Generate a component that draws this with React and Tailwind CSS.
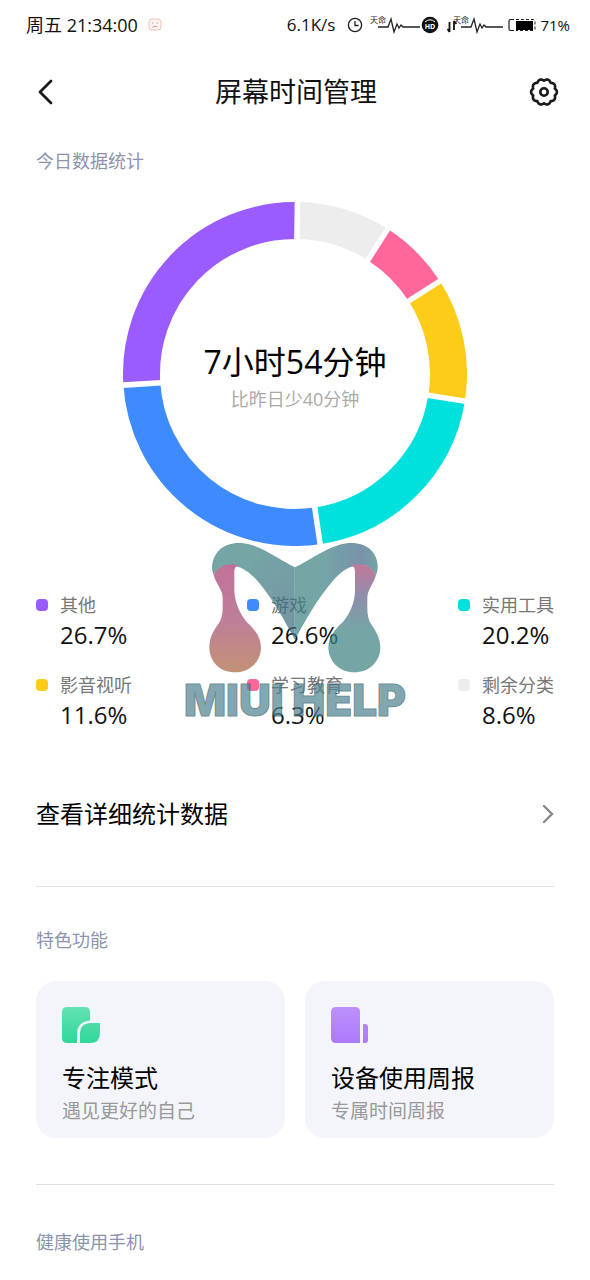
import React from 'react';

const categories = [
  { name: '其他', value: '26.7%', dot: 'bg-[#9b5cff]' },
  { name: '游戏', value: '26.6%', dot: 'bg-[#3d8bff]' },
  { name: '实用工具', value: '20.2%', dot: 'bg-[#00e0dc]' },
  { name: '影音视听', value: '11.6%', dot: 'bg-[#fccc18]' },
  { name: '学习教育', value: '6.3%', dot: 'bg-[#ff6699]' },
  { name: '剩余分类', value: '8.6%', dot: 'bg-[#ededed]' },
];

// start and end angle of each slice, clockwise from the top
const slices = [
  { color: '#ededed', from: 0.8, to: 32.6 },
  { color: '#ff6699', from: 32.6, to: 57.3 },
  { color: '#fccc18', from: 57.3, to: 99.1 },
  { color: '#00e0dc', from: 99.1, to: 171.6 },
  { color: '#3d8bff', from: 171.6, to: 266.3 },
  { color: '#9b5cff', from: 266.3, to: 360.8 },
];

const polar = (radius, angle, center) => {
  const rad = ((angle - 90) * Math.PI) / 180;
  return `${(center + radius * Math.cos(rad)).toFixed(2)} ${(center + radius * Math.sin(rad)).toFixed(2)}`;
};

// ten round lobes with a short notch between them
const gearPath = () => {
  const points = [];
  for (let a = 0; a < 360; a += 3) {
    points.push(polar(11.3 + 1.6 * Math.abs(Math.sin((a * 5 * Math.PI) / 180)), a, 15));
  }
  return `M${points.join('L')}Z`;
};

const Donut = () => (
  <svg viewBox="0 0 344 344" className="w-full" aria-hidden="true">
    {slices.map((s) => (
      <path
        key={s.color}
        d={`M${polar(153.5, s.from, 172)}A153.5 153.5 0 0 1 ${polar(153.5, s.to, 172)}`}
        fill="none"
        stroke={s.color}
        strokeWidth="37"
      />
    ))}
    {slices.map((s) => (
      <path
        key={s.from}
        d={`M${polar(130, s.from, 172)}L${polar(175, s.from, 172)}`}
        stroke="#fff"
        strokeWidth="5.5"
      />
    ))}
  </svg>
);

const Pulse = () => (
  <svg viewBox="0 0 50 22" className="h-[22px] w-[50px]" aria-hidden="true">
    <text x="0" y="9" fontSize="8" fill="#222">天命</text>
    <path
      d="M8 13H18L21 5L24 18L27 10L29 14L31 11L33 13H50"
      fill="none"
      stroke="#222"
      strokeWidth="1.3"
    />
  </svg>
);

const StatusBar = () => (
  <div className="flex h-[50px] items-center justify-between pr-5 pl-[26px] text-[18px] text-[#111]">
    <div className="flex items-center gap-2.5">
      <span>周五 21:34:00</span>
      <svg viewBox="0 0 14 14" className="size-[14px]" aria-hidden="true">
        <rect x="1" y="1" width="12" height="11" rx="3" fill="#fff3f0" stroke="#e9c4be" />
        <path d="M4 5H5.500M8.500 5H10M4.500 9Q7 7.500 9.500 9" stroke="#c99" fill="none" />
      </svg>
    </div>
    <div className="flex items-center">
      <span className="text-[17px]">6.1K/s</span>
      <svg viewBox="0 0 16 16" className="ml-3 size-4" fill="none" stroke="#222" strokeWidth="1.3" aria-hidden="true">
        <circle cx="8" cy="8" r="6.600" />
        <path d="M8 4V8.500H11.500" />
      </svg>
      <div className="ml-[7px] flex">
        <Pulse />
      </div>
      <svg viewBox="0 0 18 18" className="ml-px size-[18px]" aria-hidden="true">
        <circle cx="9" cy="9" r="8.300" fill="#111" />
        <path d="M4 6Q9 1.500 14 6" fill="none" stroke="#fff" strokeWidth="1" />
        <text x="9" y="12.500" fontSize="7" fontWeight="700" textAnchor="middle" fill="#fff">HD</text>
      </svg>
      <svg viewBox="0 0 10 16" className="ml-2 h-4 w-[10px]" fill="none" stroke="#111" strokeWidth="1.800" aria-hidden="true">
        <path d="M2.500 5V15M0.500 12L2.500 15M7 13V4M9.500 7L7 4" />
      </svg>
      <div className="-ml-1 flex">
        <Pulse />
      </div>
      <svg viewBox="0 0 30 14" className="ml-1 h-[14px] w-[30px]" aria-hidden="true">
        <path d="M7 1.500H3.500Q2 1.500 2 3V11Q2 12.500 3.500 12.500H7" fill="none" stroke="#222" strokeWidth="1.200" />
        <rect x="9" y="3" width="17" height="9" fill="#000" />
        <path d="M9 1.500H26Q28 1.500 28 3V11Q28 12.500 26 12.500H9" fill="none" stroke="#222" strokeDasharray="3 2" />
      </svg>
      <span className="ml-[3px] text-[15px]">71%</span>
    </div>
  </div>
);

const Watermark = () => (
  <div className="pointer-events-none absolute inset-x-0 top-[408px] flex flex-col items-center opacity-70">
    <svg viewBox="120 36 515 394" className="h-[131px] w-[172px]" aria-hidden="true">
      <defs>
        <linearGradient id="legLeft" x1="0" y1="0" x2="0" y2="1">
          <stop offset="0" stopColor="#a8356f" />
          <stop offset="0.5" stopColor="#a3486f" />
          <stop offset="1" stopColor="#a9643c" />
        </linearGradient>
        <linearGradient id="legRight" x1="0" y1="0" x2="0" y2="1">
          <stop offset="0" stopColor="#a8406f" />
          <stop offset="0.3" stopColor="#5f5f88" />
          <stop offset="0.6" stopColor="#3b8080" />
          <stop offset="1" stopColor="#3b8080" />
        </linearGradient>
        <linearGradient id="armLeft" x1="0" y1="0" x2="1" y2="1">
          <stop offset="0.3" stopColor="#3b8080" />
          <stop offset="1" stopColor="#3c6880" />
        </linearGradient>
        <linearGradient id="armRight" x1="0" y1="0" x2="1" y2="0">
          <stop offset="0" stopColor="#3b8080" />
          <stop offset="0.35" stopColor="#3b8080" />
          <stop offset="0.8" stopColor="#3f6487" />
          <stop offset="1" stopColor="#3b8080" />
        </linearGradient>
      </defs>
      <path
        d="M133 136C122 112 130 80 150 60C172 38 210 34 245 44C295 60 335 92 377 112V330C345 270 310 205 265 153C245 131 215 108 196 110C170 100 148 110 133 136Z"
        fill="url(#armLeft)"
      />
      <path
        d="M621 136C632 112 626 80 606 60C584 38 546 34 511 44C461 60 419 92 377 112V330C409 270 446 205 491 153C511 131 537 108 558 110C584 98 606 110 621 136Z"
        fill="url(#armRight)"
      />
      <path
        d="M133 136C148 106 172 98 208 106C197 109 195 118 195 128V185C198 220 210 250 233 277C260 302 275 325 275 354C275 395 242 428 197 428C152 428 120 395 120 354C120 325 130 307 145 286C156 270 160 253 160 235V205C160 180 141 163 133 136Z"
        fill="url(#legLeft)"
      />
      <path
        d="M621 136C606 106 582 98 546 106C556 109 558 118 558 128V185C556 220 544 250 521 277C493 302 478 325 478 354C478 395 512 428 556 428C601 428 634 395 634 354C634 325 622 307 608 286C598 270 595 253 595 235V205C595 180 613 163 621 136Z"
        fill="url(#legRight)"
      />
    </svg>
    <p className="mt-1 font-['Inter',sans-serif] text-[44px] leading-[46px] font-black whitespace-nowrap text-[#508391] [-webkit-text-stroke:1px_#2f5f6c]">
      MIUI HELP
    </p>
  </div>
);

const FeatureCard = ({ title, subtitle, children }) => (
  <button className="rounded-[20px] bg-[#f4f5fa] px-[26px] pt-[25px] pb-3 text-left">
    {children}
    <span className="mt-4 block text-[24px] leading-[36px] text-black">{title}</span>
    <span className="block text-[19px] leading-[30px] text-[#999]">{subtitle}</span>
  </button>
);

const App = () => {
  return (
    <div className="overflow-hidden bg-white font-['Open_Sans','Noto_Sans_CJK_SC',sans-serif]">
      <StatusBar />

      <header className="flex h-[84px] items-center justify-between pr-[31px] pl-[34px]">
        <button aria-label="返回" className="w-[29px]">
          <svg viewBox="0 0 20 28" className="h-7 w-5" fill="none" stroke="#1a1a1a" strokeWidth="2.800" strokeLinecap="round" strokeLinejoin="round">
            <path d="M17 3L6 14L17 25" />
          </svg>
        </button>
        <h1 className="text-[27px] leading-[40px] text-[#111]">屏幕时间管理</h1>
        <button aria-label="设置">
          <svg viewBox="0 0 30 30" className="size-[30px]" fill="none" stroke="#1a1a1a" strokeWidth="2.600" strokeLinejoin="round">
            <path d={gearPath()} />
            <circle cx="15" cy="15" r="3.700" />
          </svg>
        </button>
      </header>

      <main className="px-9 pb-6">
        <section className="relative pt-[13px]">
          <h2 className="text-[18px] leading-[28px] text-[#8c93ab]">今日数据统计</h2>

          {/* Usage chart */}
          <div className="mx-auto mt-[27px] grid w-[344px] items-center justify-items-center *:col-start-1 *:row-start-1">
            <Donut />
            <div className="pt-1.5 text-center">
              <p className="text-[32px] leading-[44px] text-black">7小时54分钟</p>
              <p className="text-[18px] leading-[30px] text-[#aaa]">比昨日少40分钟</p>
            </div>
          </div>

          {/* Legend */}
          <ul className="mt-11 grid grid-cols-[auto_auto_auto] justify-between gap-y-5">
            {categories.map((c) => (
              <li key={c.name} className="grid grid-cols-[12px_auto] items-center gap-x-3">
                <span className={`size-3 rounded-[4px] ${c.dot}`} />
                <span className="text-[18px] leading-[30px] text-[#777]">{c.name}</span>
                <span className="col-start-2 text-[24px] leading-[30px] text-[#111]">{c.value}</span>
              </li>
            ))}
          </ul>

          <Watermark />
        </section>

        <a href="#details" className="mt-[62px] flex h-[44px] items-center justify-between">
          <span className="text-[24px] text-black">查看详细统计数据</span>
          <svg viewBox="0 0 12 20" className="h-5 w-3" fill="none" stroke="#888" strokeWidth="2.400" strokeLinecap="round">
            <path d="M2 2L10 10L2 18" />
          </svg>
        </a>
        <hr className="mt-[50px] border-[#e2e2e2]" />

        <section className="mt-[39px]">
          <h2 className="text-[18px] leading-[28px] text-[#8c93ab]">特色功能</h2>
          <div className="mt-[27px] grid grid-cols-2 gap-5">
            <FeatureCard title="专注模式" subtitle="遇见更好的自己">
              <svg viewBox="0 0 38 38" className="size-[38px]" aria-hidden="true">
                <defs>
                  <linearGradient id="focus" x1="0" y1="0" x2="0" y2="38" gradientUnits="userSpaceOnUse">
                    <stop stopColor="#65e2b3" />
                    <stop offset="1" stopColor="#2fd79a" />
                  </linearGradient>
                </defs>
                <path d="M5 1H23Q28 1 28 6V14.500Q15 16 15 28V37H5Q0 37 0 32V6Q0 1 5 1Z" fill="url(#focus)" />
                <path d="M18 37V28Q18 17 29 17H38V27Q38 37 28 37Z" fill="url(#focus)" />
              </svg>
            </FeatureCard>
            <FeatureCard title="设备使用周报" subtitle="专属时间周报">
              <svg viewBox="0 0 38 38" className="size-[38px]" aria-hidden="true">
                <defs>
                  <linearGradient id="report" x1="0" y1="0" x2="0" y2="38" gradientUnits="userSpaceOnUse">
                    <stop stopColor="#bb92fc" />
                    <stop offset="1" stopColor="#ad78fc" />
                  </linearGradient>
                </defs>
                <path d="M5 1H24Q29 1 29 6V37H5Q0 37 0 32V6Q0 1 5 1Z" fill="url(#report)" />
                <path d="M32 18H34Q37 18 37 21V34Q37 37 34 37H32Z" fill="url(#report)" />
              </svg>
            </FeatureCard>
          </div>
        </section>
        <hr className="mt-[46px] border-[#e2e2e2]" />

        <section className="mt-[43px]">
          <h2 className="text-[18px] leading-[28px] text-[#8c93ab]">健康使用手机</h2>
        </section>
      </main>
    </div>
  );
};

export default App;
